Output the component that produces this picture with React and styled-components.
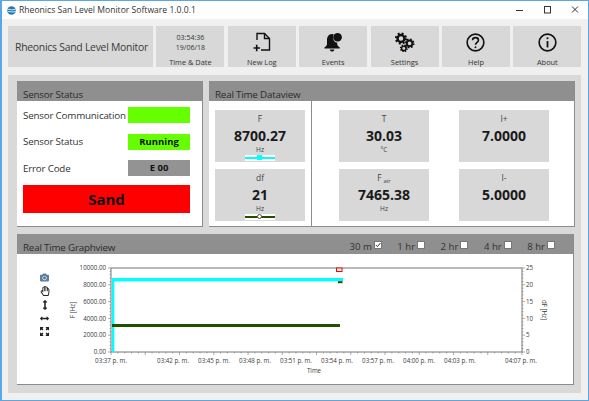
import React from 'react';
import styled, { createGlobalStyle } from 'styled-components';
import { FaCamera, FaRegHandPaper, FaArrowsAltV, FaArrowsAltH } from 'react-icons/fa';

const GlobalStyle = createGlobalStyle`
  html, body { margin: 0; padding: 0; background: #f0f0f0; }
  * { box-sizing: border-box; }
`;

const Frame = styled.div`
  width: 589px;
  height: 401px;
  border: 1px solid #5aa7e4;
  border-left-width: 2px;
  background: #f0f0f0;
  font-family: "Open Sans", "Noto Sans", sans-serif;
  color: #333;
  overflow: hidden;
  display: flex;
  flex-direction: column;
`;

const TitleBar = styled.div`
  height: 18px;
  flex: none;
  background: #fff;
  display: flex;
  align-items: center;
  padding-left: 5px;
  font-size: 8.6px;
  color: #333;
  gap: 3px;
`;

const WindowButtons = styled.div`
  margin-left: auto;
  display: flex;
  align-items: center;
`;

const WindowButton = styled.svg`
  width: 27px;
  height: 10px;
`;

const Toolbar = styled.div`
  margin: 7px 0 0 6px;
  display: grid;
  grid-template-columns: 145px repeat(6, 68px);
  column-gap: 3.4px;
  height: 41px;
  flex: none;
`;

const Tile = styled.div`
  background: #d8d8d8;
  display: flex;
  flex-direction: column;
  align-items: center;
`;

const AppName = styled(Tile)`
  justify-content: center;
  align-items: flex-start;
  padding-left: 7px;
  font-size: 10.4px;
  letter-spacing: -0.25px;
  white-space: nowrap;
  color: #3a3a3a;
`;

const ClockLine = styled.div`
  font-size: 7px;
  line-height: 10px;
  &:first-child { margin-top: 7px; }
`;

const ToolLabel = styled.div`
  font-size: 7.4px;
  line-height: 10px;
  margin-top: ${(props) => props.$top || 0}px;
  color: #333;
`;

const IconSlot = styled.div`
  height: 31px;
  display: flex;
  align-items: flex-end;
  justify-content: center;
  flex: none;
  padding-bottom: 5px;
`;

const Board = styled.div`
  margin: 8px 0 0 6px;
  width: 573px;
  height: 318px;
  background: #d9d9d9;
  padding: 6px 6px 0 9px;
  display: flex;
  flex-direction: column;
  gap: 7px;
`;

const TopRow = styled.div`
  display: flex;
  gap: 6px;
  height: 146px;
`;

const Card = styled.div`
  background: #fff;
  border-right: 1px solid #8c8c8c;
  border-bottom: 1px solid #8c8c8c;
  display: flex;
  flex-direction: column;
  width: ${(props) => props.$width}px;
  height: ${(props) => props.$height}px;
`;

const CardHead = styled.div`
  height: 20px;
  flex: none;
  background: #8f8f8f;
  display: flex;
  align-items: flex-end;
  padding: 0 6px 0 6px;
  font-size: 9.8px;
  letter-spacing: -0.2px;
  line-height: 13px;
  color: #2b2b2b;
`;

const StatusGrid = styled.div`
  display: grid;
  grid-template-columns: 105px 62px;
  grid-auto-rows: 16px;
  row-gap: 10.5px;
  padding: 6px 0 0 6px;
  align-items: center;
  font-size: 9.8px;
  letter-spacing: -0.2px;
  white-space: nowrap;
`;

const Lamp = styled.div`
  height: 16px;
  background: ${(props) => props.$color};
  color: #111;
  font-weight: 700;
  font-size: 9.5px;
  letter-spacing: 0;
  line-height: 16px;
  text-align: center;
`;

const SandBanner = styled.div`
  margin: 9px 0 0 6px;
  width: 167px;
  height: 28px;
  background: #ff0000;
  color: #111;
  font-weight: 700;
  font-size: 15px;
  line-height: 28px;
  text-align: center;
`;

const DataBody = styled.div`
  flex: 1;
  display: flex;
`;

const FreqColumn = styled.div`
  width: 103px;
  border-right: 1px solid #8c8c8c;
  padding: 9px 0 0 6px;
  display: grid;
  grid-template-columns: 90px;
  grid-auto-rows: 52px;
  row-gap: 7px;
`;

const ReadingGrid = styled.div`
  margin-left: 27px;
  padding-top: 9px;
  display: grid;
  grid-template-columns: 90px 90px;
  grid-auto-rows: 52px;
  gap: 7px 30px;
`;

const Reading = styled(Tile)`
  padding-top: 3px;
`;

const ReadingName = styled.div`
  font-size: 8.4px;
  line-height: 12px;
  color: #444;
  sub { font-size: 6px; vertical-align: -2px; line-height: 0; margin-left: 2px; }
`;

const ReadingValue = styled.div`
  font-size: 14px;
  line-height: 18px;
  margin-top: 2px;
  font-weight: 700;
  color: #1a1a1a;
`;

const ReadingUnit = styled.div`
  font-size: 6.6px;
  line-height: 9px;
  color: #444;
`;

const Slider = styled.div`
  position: relative;
  width: 30px;
  height: 6px;
  margin-top: 1px;
  background: #fff;
  &::before {
    content: '';
    position: absolute;
    left: 0;
    right: 0;
    top: 2px;
    height: 1.5px;
    background: ${(props) => props.$color};
  }
`;

const Thumb = styled.div`
  position: absolute;
  left: 12px;
  top: 0;
  width: 5px;
  height: 5px;
  background: ${(props) => (props.$round ? '#fff' : props.$color)};
  border: ${(props) => (props.$round ? '1px solid #555' : 'none')};
  border-radius: ${(props) => (props.$round ? '50%' : '0')};
`;

const GraphHead = styled(CardHead)`
  justify-content: space-between;
  padding-right: 18px;
`;

const RangeList = styled.div`
  display: flex;
  gap: 15.5px;
  letter-spacing: 0;
`;

const Range = styled.label`
  display: flex;
  align-items: center;
  gap: 2px;
  height: 16px;
  color: #333;
  font-size: 9.6px;
`;

const RangeBox = styled.span`
  width: 8px;
  height: 8px;
  background: #fff;
  border: 1px solid #777;
  display: flex;
  align-items: center;
  justify-content: center;
  margin-top: -2px;
`;

const GraphBody = styled.div`
  flex: 1;
  display: flex;
`;

const ToolColumn = styled.div`
  padding: 17px 0 0 15px;
  display: flex;
  flex-direction: column;
  align-items: center;
  width: 40px;
  flex: none;
`;

const ToolIcon = styled.div`
  height: 13.5px;
  display: flex;
  align-items: center;
  justify-content: center;
  color: ${(props) => props.$color || '#222'};
  font-size: ${(props) => props.$size || 9}px;
`;

const Chart = styled.svg`
  display: block;
  flex: none;
  text {
    font-family: "Open Sans", "Noto Sans", sans-serif;
    font-size: 6.2px;
    fill: #3a3a3a;
  }
`;

const yLabels = ['10000.00', '8000.00', '6000.00', '4000.00', '2000.00', '0.00'];
const rightLabels = ['25', '20', '15', '10', '5', '0'];
const xLabels = [
  [111, '03:37 p. m.'], [173, '03:42 p. m.'], [214, '03:45 p. m.'], [255, '03:48 p. m.'],
  [296, '03:51 p. m.'], [337, '03:54 p. m.'], [378, '03:57 p. m.'], [419, '04:00 p. m.'],
  [460, '04:03 p. m.'], [521, '04:07 p. m.'],
];
const ranges = ['30 m', '1 hr', '2 hr', '4 hr', '8 hr'];

function LogIcon() {
  return (
    <svg width="18" height="20" viewBox="0 0 18 20" fill="none" stroke="#111" strokeWidth="1.4">
      <path d="M4 8V1.5H11.5L16.5 6.5V18H8" />
      <path d="M11.5 1.5V6.5H16.5" />
      <path d="M0.5 16H7M3.7 12.8V19.2" strokeWidth="1.6" />
    </svg>
  );
}

function BellIcon() {
  return (
    <svg width="20" height="20" viewBox="0 0 20 20" fill="#111">
      <path d="M9 2C5.6 2 4 5 4 8V12C4 13.6 2.8 14.4 1.4 15.4V16.6H16.8V15.4C15.4 14.4 14.2 13.6 14.2 12V10.6C11 10.6 9.4 7.4 10.6 2.3C10.1 2.1 9.6 2 9 2Z" />
      <circle cx="14.6" cy="5.2" r="4.3" />
      <path d="M6.8 17.6H11.4C11.2 19 10.2 19.6 9.1 19.6C8 19.6 7 19 6.8 17.6Z" />
    </svg>
  );
}

function Gear({ cx, cy, r }) {
  const ring = 2 * Math.PI * r;
  return (
    <g fill="none" stroke="#111">
      <circle cx={cx} cy={cy} r={r} strokeWidth={r * 0.55} strokeDasharray={`${ring / 16} ${ring / 16}`} />
      <circle cx={cx} cy={cy} r={r * 0.72} strokeWidth={r * 0.5} />
    </g>
  );
}

function GearsIcon() {
  return (
    <svg width="20" height="20" viewBox="0 0 20 20">
      <Gear cx={6} cy={6.5} r={4.8} />
      <Gear cx={14.6} cy={11.4} r={3.9} />
      <Gear cx={8.8} cy={16.4} r={3.1} />
    </svg>
  );
}

function HelpIcon() {
  return (
    <svg width="19" height="19" viewBox="0 0 20 20" fill="none" stroke="#111" strokeWidth="1.7">
      <circle cx="10" cy="10" r="8.8" />
      <path d="M6.9 7.6C7 5.8 8.3 4.9 10 4.9C11.8 4.9 13.1 6 13.1 7.5C13.1 9.8 10 9.8 10 12.4" />
      <circle cx="10" cy="15" r="1" fill="#111" stroke="none" />
    </svg>
  );
}

function InfoIcon() {
  return (
    <svg width="19" height="19" viewBox="0 0 20 20" fill="none" stroke="#111" strokeWidth="1.7">
      <circle cx="10" cy="10" r="8.8" />
      <path d="M10 8.5V15.2" strokeWidth="1.9" />
      <circle cx="10" cy="5.6" r="1.1" fill="#111" stroke="none" />
    </svg>
  );
}

function FitIcon() {
  return (
    <svg width="9" height="9" viewBox="0 0 9 9" fill="#222">
      <path d="M0 0H3.2V1L2.4 1.5L3.4 2.6L2.6 3.4L1.5 2.4L1 3.2H0Z" />
      <path d="M9 0H5.8V1L6.6 1.5L5.6 2.6L6.4 3.4L7.5 2.4L8 3.2H9Z" />
      <path d="M0 9H3.2V8L2.4 7.5L3.4 6.4L2.6 5.6L1.5 6.6L1 5.8H0Z" />
      <path d="M9 9H5.8V8L6.6 7.5L5.6 6.4L6.4 5.6L7.5 6.6L8 5.8H9Z" />
    </svg>
  );
}

function GraphChart() {
  const top = 268;
  const bottom = 352;
  const left = 111;
  const right = 522;
  const yMinor = Array.from({ length: 26 }, (_, i) => top + (i * (bottom - top)) / 25);
  const xMinor = Array.from({ length: 61 }, (_, i) => left + (i * (right - left)) / 60);
  return (
    <Chart width="517" height="129" viewBox="57 254 517 129">
      <rect x={left} y={top} width={right - left} height={bottom - top} fill="#fff" stroke="#777" />
      {yMinor.map((y, i) => (
        <g key={y} stroke="#777" strokeWidth="0.6">
          <line x1={left - (i % 5 === 0 ? 3 : 1.5)} x2={left} y1={y} y2={y} />
          <line x1={right} x2={right + (i % 5 === 0 ? 3 : 1.5)} y1={y} y2={y} />
        </g>
      ))}
      {xMinor.map((x, i) => (
        <line key={x} x1={x} x2={x} y1={bottom} y2={bottom + (i % 5 === 0 ? 3 : 1.5)} stroke="#777" strokeWidth="0.6" />
      ))}
      {yLabels.map((label, i) => (
        <text key={label} x="106" y={top + 2.2 + i * 16.8} textAnchor="end">{label}</text>
      ))}
      {rightLabels.map((label, i) => (
        <text key={label} x="526" y={top + 2.2 + i * 16.8}>{label}</text>
      ))}
      {xLabels.map(([x, label]) => (
        <text key={label} x={x} y="363" textAnchor="middle">{label}</text>
      ))}
      <text x="314" y="373" textAnchor="middle">Time</text>
      <text transform="translate(75 310) rotate(-90)" textAnchor="middle">F [Hz]</text>
      <text transform="translate(542 310) rotate(90)" textAnchor="middle">dF [Hz]</text>
      <rect x="112" y="278" width="231" height="3.4" fill="#00ffff" />
      <rect x="112" y="279" width="2.4" height="73" fill="#00ffff" />
      <rect x="112" y="324" width="228" height="3" fill="#225000" />
      <rect x="336.5" y="268" width="5.5" height="3.5" fill="#fff" stroke="#f00" />
      <rect x="338" y="281.2" width="4.5" height="2" fill="#225000" />
    </Chart>
  );
}

export default function App() {
  return (
    <Frame>
      <GlobalStyle />
      <TitleBar>
        <svg width="9" height="9" viewBox="0 0 9 9">
          <circle cx="4.5" cy="4.5" r="4.3" fill="#1f7db4" />
          <path d="M0.5 3.6C2.5 2.4 4.5 5 8.5 3.2M0.5 5.8C3 4.6 5 7 8.5 5.4" stroke="#fff" strokeWidth="0.8" fill="none" />
        </svg>
        <span>Rheonics San Level Monitor Software 1.0.0.1</span>
        <WindowButtons>
          <WindowButton viewBox="0 0 27 10" stroke="#333" fill="none">
            <path d="M9 5.5H16" />
          </WindowButton>
          <WindowButton viewBox="0 0 27 10" stroke="#333" fill="none">
            <rect x="10.5" y="1.5" width="6" height="6.5" />
          </WindowButton>
          <WindowButton viewBox="0 0 27 10" stroke="#333" fill="none">
            <path d="M11 1.5L17 7.5M17 1.5L11 7.5" />
          </WindowButton>
        </WindowButtons>
      </TitleBar>

      <Toolbar>
        <AppName>Rheonics Sand Level Monitor</AppName>
        <Tile>
          <ClockLine>03:54:36</ClockLine>
          <ClockLine>19/06/18</ClockLine>
          <ToolLabel $top={4}>Time &amp; Date</ToolLabel>
        </Tile>
        <Tile>
          <IconSlot><LogIcon /></IconSlot>
          <ToolLabel>New Log</ToolLabel>
        </Tile>
        <Tile>
          <IconSlot><BellIcon /></IconSlot>
          <ToolLabel>Events</ToolLabel>
        </Tile>
        <Tile>
          <IconSlot><GearsIcon /></IconSlot>
          <ToolLabel>Settings</ToolLabel>
        </Tile>
        <Tile>
          <IconSlot><HelpIcon /></IconSlot>
          <ToolLabel>Help</ToolLabel>
        </Tile>
        <Tile>
          <IconSlot><InfoIcon /></IconSlot>
          <ToolLabel>About</ToolLabel>
        </Tile>
      </Toolbar>

      <Board>
        <TopRow>
          <Card $width={186} $height={146}>
            <CardHead>Sensor Status</CardHead>
            <StatusGrid>
              <span>Sensor Communication</span>
              <Lamp $color="#66ff00" />
              <span>Sensor Status</span>
              <Lamp $color="#66ff00">Running</Lamp>
              <span>Error Code</span>
              <Lamp $color="#939393">E 00</Lamp>
            </StatusGrid>
            <SandBanner>Sand</SandBanner>
          </Card>
          <Card $width={366} $height={146}>
            <CardHead>Real Time Dataview</CardHead>
            <DataBody>
              <FreqColumn>
                <Reading>
                  <ReadingName>F</ReadingName>
                  <ReadingValue>8700.27</ReadingValue>
                  <ReadingUnit>Hz</ReadingUnit>
                  <Slider $color="#00ffff"><Thumb $color="#00ffff" /></Slider>
                </Reading>
                <Reading>
                  <ReadingName>df</ReadingName>
                  <ReadingValue>21</ReadingValue>
                  <ReadingUnit>Hz</ReadingUnit>
                  <Slider $color="#225000"><Thumb $round /></Slider>
                </Reading>
              </FreqColumn>
              <ReadingGrid>
                <Reading>
                  <ReadingName>T</ReadingName>
                  <ReadingValue>30.03</ReadingValue>
                  <ReadingUnit>°C</ReadingUnit>
                </Reading>
                <Reading>
                  <ReadingName>I+</ReadingName>
                  <ReadingValue>7.0000</ReadingValue>
                </Reading>
                <Reading>
                  <ReadingName>F<sub>air</sub></ReadingName>
                  <ReadingValue>7465.38</ReadingValue>
                  <ReadingUnit>Hz</ReadingUnit>
                </Reading>
                <Reading>
                  <ReadingName>I-</ReadingName>
                  <ReadingValue>5.0000</ReadingValue>
                </Reading>
              </ReadingGrid>
            </DataBody>
          </Card>
        </TopRow>

        <Card $width={557} $height={151}>
          <GraphHead>
            <span>Real Time Graphview</span>
            <RangeList>
              {ranges.map((range, i) => (
                <Range key={range}>
                  {range}
                  <RangeBox>
                    {i === 0 && (
                      <svg width="6" height="6" viewBox="0 0 6 6" fill="none" stroke="#333">
                        <path d="M0.8 3L2.4 4.6L5.4 1" />
                      </svg>
                    )}
                  </RangeBox>
                </Range>
              ))}
            </RangeList>
          </GraphHead>
          <GraphBody>
            <ToolColumn>
              <ToolIcon $color="#5d7f9c"><FaCamera /></ToolIcon>
              <ToolIcon $size={10}><FaRegHandPaper /></ToolIcon>
              <ToolIcon $size={10}><FaArrowsAltV /></ToolIcon>
              <ToolIcon><FaArrowsAltH /></ToolIcon>
              <ToolIcon><FitIcon /></ToolIcon>
            </ToolColumn>
            <GraphChart />
          </GraphBody>
        </Card>
      </Board>
    </Frame>
  );
}
